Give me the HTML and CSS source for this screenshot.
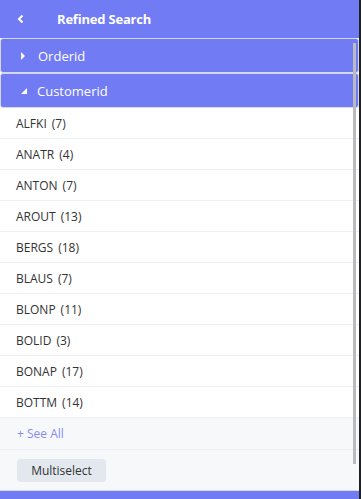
FILE: index.html
```html
<!DOCTYPE html>
<html lang="en">
<head>
    <meta charset="UTF-8">
    <meta name="viewport" content="width=device-width, initial-scale=1.0">
    <title>Refined Search</title>
    <link rel="stylesheet" href="styles.css">
</head>
<body>
    <div class="panel">
        <div class="topbar">
            <svg class="back" width="8" height="10" viewBox="0 0 8 10">
                <path d="M5.5 1.5 L2 5 L5.5 8.5" fill="none" stroke="#fff" stroke-width="2"/>
            </svg>
            <span class="title">Refined Search</span>
        </div>

        <div class="group-head">
            <svg class="tri" width="8" height="10" viewBox="0 0 8 10">
                <path d="M1 1 L5 5 L1 9 Z" fill="#fff"/>
            </svg>
            <span>Orderid</span>
        </div>
        <div class="group-head open">
            <svg class="tri" width="8" height="10" viewBox="0 0 8 10">
                <path d="M7 2 L7 8 L1 8 Z" fill="#fff"/>
            </svg>
            <span>Customerid</span>
        </div>

        <ul class="facet-list">
            <li>ALFKI<span class="count">(7)</span></li>
            <li>ANATR<span class="count">(4)</span></li>
            <li>ANTON<span class="count">(7)</span></li>
            <li>AROUT<span class="count">(13)</span></li>
            <li>BERGS<span class="count">(18)</span></li>
            <li>BLAUS<span class="count">(7)</span></li>
            <li>BLONP<span class="count">(11)</span></li>
            <li>BOLID<span class="count">(3)</span></li>
            <li>BONAP<span class="count">(17)</span></li>
            <li>BOTTM<span class="count">(14)</span></li>
        </ul>

        <div class="see-all">+ See All</div>
        <div class="multi-row">
            <button class="multi-btn">Multiselect</button>
        </div>
        <div class="bottom-bar"></div>

        <div class="scroll-thumb"></div>
    </div>
</body>
</html>
```

FILE: styles.css
```css
body {
    margin: 0;
    padding: 0;
    background-color: #1e2024;
    font-family: "Open Sans", "Noto Sans", sans-serif;
}

.panel {
    position: relative;
    width: 359px;
    height: 499px;
    background-color: #fff;
    display: flex;
    flex-direction: column;
    overflow: hidden;
}

.topbar {
    height: 38px;
    flex-shrink: 0;
    background-color: #717bf3;
    display: flex;
    align-items: center;
    padding-left: 17px;
    color: #fff;
}

.back {
    display: block;
}

.title {
    margin-left: 32px;
    font-size: 13px;
    font-weight: bold;
    letter-spacing: -0.2px;
}

.group-head {
    height: 33px;
    flex-shrink: 0;
    background-color: #717bf3;
    border: 1px solid #d5d8e8;
    border-radius: 3px;
    display: flex;
    align-items: center;
    padding-left: 19px;
    color: #fff;
    font-size: 13px;
}

.group-head .tri {
    display: block;
    margin-right: 10px;
}

.group-head.open .tri {
    margin-right: 9px;
}

.facet-list {
    list-style: none;
    margin: 0;
    padding: 0;
}

.facet-list li {
    height: 30px;
    border-bottom: 1px solid #eef0f4;
    display: flex;
    align-items: center;
    padding-left: 16px;
    font-size: 12px;
    color: #333;
}

.count {
    margin-left: 5px;
}

.see-all {
    height: 31px;
    flex-shrink: 0;
    display: flex;
    align-items: center;
    padding-left: 17px;
    background-color: #f7f8fa;
    border-bottom: 1px solid #eceef2;
    color: #868cf4;
    font-size: 12px;
}

.multi-row {
    height: 40px;
    flex-shrink: 0;
    background-color: #f7f8fa;
    display: flex;
    align-items: center;
    padding-left: 17px;
}

.multi-btn {
    height: 23px;
    width: 89px;
    padding: 0;
    border: none;
    border-radius: 4px;
    background-color: #e2e8ee;
    color: #333;
    font-family: "Open Sans", "Noto Sans", sans-serif;
    font-size: 12px;
}

.bottom-bar {
    flex: 1;
    background-color: #717bf3;
    border-top: 1px solid #d5d8e8;
}

.scroll-thumb {
    position: absolute;
    top: 43px;
    left: 353px;
    width: 3px;
    height: 421px;
    background-color: #bbbbbf;
}
```
